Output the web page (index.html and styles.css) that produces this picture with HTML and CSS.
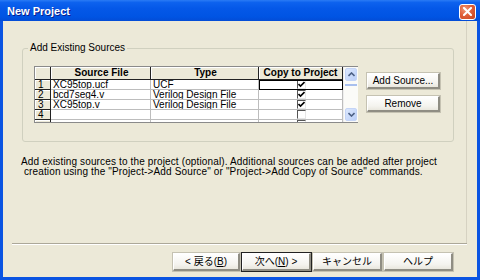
FILE: index.html
```html
<!DOCTYPE html>
<html>
<head>
<meta charset="utf-8">
<link rel="stylesheet" href="styles.css">
</head>
<body>
<div class="window">
  <div class="titlebar">
    <span class="title">New Project</span>
    <span class="close"><svg width="9" height="9" viewBox="0 0 9 9"><path d="M1 1 L8 8 M8 1 L1 8" stroke="#fff" stroke-width="2" stroke-linecap="square"/></svg></span>
  </div>
  <div class="client">
    <div class="page">
      <div class="group">
        <span class="legend">Add Existing Sources</span>
        <div class="group-body">
          <div class="grid">
            <div class="cells">
              <div class="row head">
                <div class="c rh"></div>
                <div class="c src">Source File</div>
                <div class="c typ">Type</div>
                <div class="c cp">Copy to Project</div>
              </div>
              <div class="row">
                <div class="c rh">1</div>
                <div class="c src">XC95top.ucf</div>
                <div class="c typ">UCF</div>
                <div class="c cp focus"><span class="cb"><svg class="chk" width="7" height="7" viewBox="0 0 7 7"><path d="M0.5 3 L2.5 5 L6.5 1" fill="none" stroke="#000" stroke-width="1.6"/></svg></span></div>
              </div>
              <div class="row">
                <div class="c rh">2</div>
                <div class="c src">bcd7seg4.v</div>
                <div class="c typ">Verilog Design File</div>
                <div class="c cp"><span class="cb"><svg class="chk" width="7" height="7" viewBox="0 0 7 7"><path d="M0.5 3 L2.5 5 L6.5 1" fill="none" stroke="#000" stroke-width="1.6"/></svg></span></div>
              </div>
              <div class="row">
                <div class="c rh">3</div>
                <div class="c src">XC95top.v</div>
                <div class="c typ">Verilog Design File</div>
                <div class="c cp"><span class="cb"><svg class="chk" width="7" height="7" viewBox="0 0 7 7"><path d="M0.5 3 L2.5 5 L6.5 1" fill="none" stroke="#000" stroke-width="1.6"/></svg></span></div>
              </div>
              <div class="row">
                <div class="c rh">4</div>
                <div class="c src"></div>
                <div class="c typ"></div>
                <div class="c cp"><span class="cb"></span></div>
              </div>
              <div class="row">
                <div class="c rh"><span class="partial"></span></div>
                <div class="c src"></div>
                <div class="c typ"></div>
                <div class="c cp"><span class="cb"></span></div>
              </div>
            </div>
            <div class="vscroll">
              <div class="sbtn"><svg width="7" height="5" viewBox="0 0 7 5"><path d="M0.5 4 L3.5 1 L6.5 4" fill="none" stroke="#4D6185" stroke-width="1.6"/></svg></div>
              <div class="thumb"></div>
              <div class="track"></div>
              <div class="sbtn"><svg width="7" height="5" viewBox="0 0 7 5"><path d="M0.5 1 L3.5 4 L6.5 1" fill="none" stroke="#4D6185" stroke-width="1.6"/></svg></div>
            </div>
          </div>
          <div class="side">
            <button class="btn">Add Source...</button>
            <button class="btn">Remove</button>
          </div>
        </div>
      </div>
      <p class="desc">Add existing sources to the project (optional). Additional sources can be added after project<br>&nbsp;creation using the "Project-&gt;Add Source" or "Project-&gt;Add Copy of Source" commands.</p>
    </div>
    <div class="sep"></div>
    <div class="buttons">
      <button class="btn nav back">&lt; 戻る(<u>B</u>)</button>
      <button class="btn nav def">次へ(<u>N</u>) &gt;</button>
      <button class="btn nav gap">キャンセル</button>
      <button class="btn nav gap">ヘルプ</button>
    </div>
  </div>
</div>
</body>
</html>
```
FILE: styles.css
```css
html, body {
  margin: 0;
  padding: 0;
  width: 480px;
  height: 280px;
  overflow: hidden;
  background: #ECE9D8;
}
.window {
  width: 480px;
  height: 280px;
  display: flex;
  flex-direction: column;
  font-family: "Liberation Sans", "Noto Sans CJK JP", sans-serif;
  font-size: 10px;
  color: #000;
  background: #0A54E2;
  box-sizing: border-box;
}
.titlebar {
  height: 21px;
  flex: none;
  display: flex;
  align-items: center;
  justify-content: space-between;
  padding: 0 4px 0 7px;
  background: linear-gradient(to bottom, #2A7BF5 0%, #0D62EE 12%, #0558E8 40%, #0054E3 80%, #034CD6 100%);
}
.title {
  color: #fff;
  font-weight: bold;
  font-size: 11px;
  letter-spacing: 0;
  text-shadow: 1px 1px 0 #0A1E8C;
  padding-top: 1px;
}
.close {
  width: 17px;
  height: 16px;
  box-sizing: border-box;
  border: 1px solid #fff;
  border-radius: 3px;
  background: radial-gradient(circle at 35% 30%, #F09A78 0%, #E0603A 45%, #C8431C 100%);
  display: flex;
  align-items: center;
  justify-content: center;
  margin-top: 2px;
}
.client {
  flex: 1;
  margin: 0 3px 3px 3px;
  background: #ECE9D8;
  display: flex;
  flex-direction: column;
}
.page {
  height: 222px;
  margin: 0 10px 0 9px;
  padding: 27px 12px 0 10px;
  box-sizing: border-box;
  border-right: 1px solid #D6D2C2;
}
.group {
  position: relative;
  border: 1px solid #D0D0BF;
  border-radius: 3px;
  height: 94px;
  box-sizing: border-box;
  padding: 17px 0 0 11px;
}
.legend {
  position: absolute;
  left: 5px;
  top: -7px;
  padding: 0 2px;
  background: #ECE9D8;
  color: #000;
  line-height: 12px;
}
.group-body {
  display: flex;
  align-items: flex-start;
}
.grid {
  display: flex;
  height: 57px;
  overflow: hidden;
  border: 1px solid #8A8A8A;
  border-right: none;
  box-sizing: border-box;
  background: #fff;
}
.cells {
  width: 308px;
}
.row {
  display: flex;
  height: 10px;
}
.row.head {
  height: 13px;
}
.c {
  box-sizing: border-box;
  border-right: 1px solid #BDBDBD;
  border-bottom: 1px solid #BDBDBD;
  padding-left: 2px;
  line-height: 10px;
  white-space: nowrap;
  overflow: hidden;
}
.head .c {
  background: #ECE9D8;
  font-weight: bold;
  text-align: center;
  border-right: 1px solid #222;
  border-bottom: 1px solid #222;
  line-height: 12px;
  box-shadow: inset 1px 1px 0 #fff;
}
.rh {
  width: 16px;
  background: #ECE9D8;
  border-right: 1px solid #222;
  border-bottom: 1px solid #222;
  box-shadow: inset 1px 1px 0 #fff;
  padding-left: 3px;
}
.partial {
  display: block;
  width: 4px;
  height: 1px;
  margin-top: 2px;
  background: #000;
}
.src { width: 100px; }
.typ { width: 108px; }
.cp {
  width: 84px;
  display: flex;
  justify-content: center;
  padding-left: 0;
  padding-right: 0;
  align-items: flex-start;
}
.cp.focus {
  border: 1px solid #000;
}
.cb {
  width: 9px;
  height: 9px;
  margin-top: 0;
  margin-left: 1px;
  box-sizing: border-box;
  border-left: 1px solid #555;
  border-top: 1px solid #555;
  border-right: 1px solid #E6E6E6;
  border-bottom: 1px solid #E6E6E6;
  background: #fff;
  display: flex;
}
.chk {
  display: block;
  margin: 0;
}
.focus .cb { margin-top: -1px; margin-left: 1px; }
.vscroll {
  width: 14px;
  display: flex;
  flex-direction: column;
  background: #FBFBF8;
  border-left: 1px solid #EEE;
}
.sbtn {
  height: 13px;
  flex: none;
  margin: 1px;
  border-radius: 2px;
  background: linear-gradient(to bottom right, #DCE8FD, #BBCFF8);
  border: 1px solid #C4D4F6;
  box-sizing: border-box;
  display: flex;
  align-items: center;
  justify-content: center;
}
.thumb {
  height: 2px;
  margin: 2px 1px 0;
  background: #A9C0EE;
}
.track { flex: 1; }
.side {
  display: flex;
  flex-direction: column;
  gap: 7px;
  margin-left: 9px;
  margin-top: 7px;
}
.btn {
  font-family: "Liberation Sans", "Noto Sans CJK JP", sans-serif;
  font-size: 10px;
  color: #000;
  background: linear-gradient(to bottom, #FFFFFF 0%, #F4F3EE 70%, #E9E7DE 100%);
  border: 1px solid #fff;
  border-right: 2px solid #8F8D83;
  border-bottom: 2px solid #8F8D83;
  outline: 1px solid #C5C2B2;
  border-radius: 0;
  padding: 0;
  height: 16px;
  width: 73px;
  line-height: 12px;
}
.desc {
  margin: 15px 0 0 -1px;
  font-size: 10px;
  letter-spacing: 0.14px;
  line-height: 10px;
  white-space: nowrap;
}
.sep {
  height: 0;
  margin: 0 10px 0 9px;
  border-top: 1px solid #ACA899;
  border-bottom: 1px solid #fff;
}
.buttons {
  display: flex;
  padding: 8px 0 0 170px;
}
.btn.nav {
  width: 69px;
  height: 18px;
  font-size: 10px;
}
.btn.nav.back { width: 67px; }
.btn.nav + .btn.nav { margin-left: 2px; }
.btn.nav.gap { margin-left: 9px; }
.btn.def {
  outline: 1px solid #222;
}
```
